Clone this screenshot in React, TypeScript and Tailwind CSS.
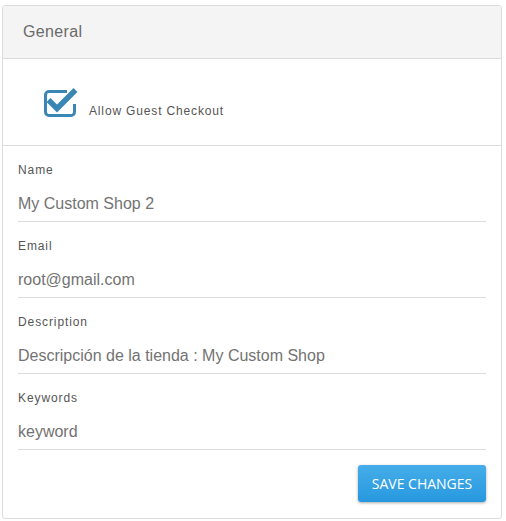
import React from 'react';

const fields = [
  { label: 'Name', value: 'My Custom Shop 2' },
  { label: 'Email', value: 'root@gmail.com' },
  { label: 'Description', value: 'Descripción de la tienda : My Custom Shop' },
  { label: 'Keywords', value: 'keyword' },
];

function CheckIcon() {
  return (
    <svg width="36" height="32" viewBox="0 0 36 32" fill="none">
      <path
        d="M24 4.5H6a3.5 3.5 0 0 0-3.5 3.5V25a3.5 3.5 0 0 0 3.5 3.5H28a3.5 3.5 0 0 0 3.5-3.5V17"
        stroke="#3a87b5"
        strokeWidth="3"
      />
      <path d="M5.5 13L14 21.5L32.5 3" stroke="#3a87b5" strokeWidth="5.5" />
    </svg>
  );
}

export default function App() {
  return (
    <div className="min-h-[521px] bg-white pt-[5px] pl-[2px] font-['Liberation_Sans',sans-serif]">
      <div className="w-[500px] h-[514px] border border-[#dcdcdc] rounded-[3px] overflow-hidden flex flex-col">
        <div className="h-[53px] bg-[#f4f4f4] border-b border-[#dcdcdc] px-[20px] flex items-center">
          <span className="text-[16px] tracking-[0.35px] text-[#6a6a6a]">General</span>
        </div>
        <div className="h-[87px] border-b border-[#dcdcdc] flex items-end pl-[40px] pb-[26px]">
          <CheckIcon />
          <span className="ml-[10px] mb-[1px] text-[12px] leading-[14px] tracking-[0.85px] text-[#555]">
            Allow Guest Checkout
          </span>
        </div>
        <div className="px-[15px] pt-[16px] flex flex-col">
          {fields.map((f, i) => (
            <div key={f.label} className={i > 0 ? 'mt-[16px]' : ''}>
              <div className="text-[12px] leading-[16px] tracking-[0.9px] text-[#555]">{f.label}</div>
              <div className="pt-[15px] pb-[7px] text-[16px] leading-[21px] text-[#737373] border-b border-[#dcdcdc]">
                {f.value}
              </div>
            </div>
          ))}
          <div className="flex justify-end mt-[15px]">
            <button className="w-[128px] h-[37px] rounded-[3px] bg-gradient-to-b from-[#45ade9] to-[#2698df] text-white text-[14px] font-['Open_Sans',sans-serif] shadow-[0_1px_3px_rgba(0,0,0,0.35)]">
              SAVE CHANGES
            </button>
          </div>
        </div>
      </div>
    </div>
  );
}
